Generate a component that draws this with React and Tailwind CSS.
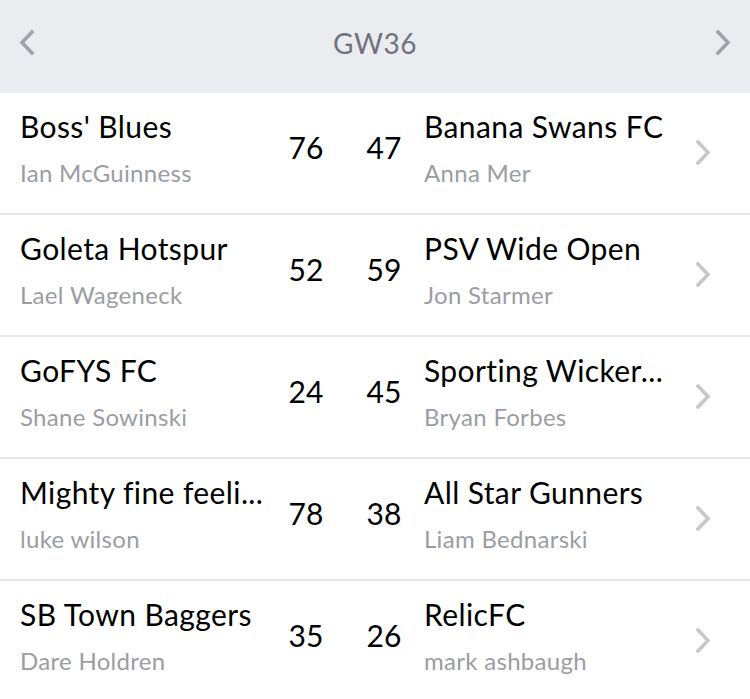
const matches = [
  { home: "Boss' Blues", homeMgr: "Ian McGuinness", homeScore: 76, away: "Banana Swans FC", awayMgr: "Anna Mer", awayScore: 47 },
  { home: "Goleta Hotspur", homeMgr: "Lael Wageneck", homeScore: 52, away: "PSV Wide Open", awayMgr: "Jon Starmer", awayScore: 59 },
  { home: "GoFYS FC", homeMgr: "Shane Sowinski", homeScore: 24, away: "Sporting Wicker...", awayMgr: "Bryan Forbes", awayScore: 45 },
  { home: "Mighty fine feeli...", homeMgr: "luke wilson", homeScore: 78, away: "All Star Gunners", awayMgr: "Liam Bednarski", awayScore: 38 },
  { home: "SB Town Baggers", homeMgr: "Dare Holdren", homeScore: 35, away: "RelicFC", awayMgr: "mark ashbaugh", awayScore: 26 },
];

function Chevron({ dir = "right", className = "" }) {
  return (
    <svg viewBox="0 0 16 27" className={className} fill="none" stroke="currentColor" strokeWidth="3.5" strokeLinecap="square">
      {dir === "right" ? <path d="M3 3 L13 13.5 L3 24" /> : <path d="M13 3 L3 13.5 L13 24" />}
    </svg>
  );
}

function TeamCell({ name, manager }) {
  return (
    <div className="min-w-0">
      <p className="whitespace-nowrap text-[30px] leading-[36px] tracking-[0.4px] text-black">{name}</p>
      <p className="mt-[15px] whitespace-nowrap text-[24px] leading-[28px] tracking-[0.3px] text-[#9b9da3]">
        {manager}
      </p>
    </div>
  );
}

export default function App() {
  return (
    <div className="h-[699px] w-[750px] overflow-hidden bg-white font-['Lato',sans-serif]">
      <header className="flex h-[93px] items-center justify-between bg-[#ebecef] px-[18px] pb-[8px]">
        <Chevron dir="left" className="h-[27px] w-[18px] text-[#a0a2aa]" />
        <h1 className="text-[28px] tracking-[0.5px] text-[#70737d]">GW36</h1>
        <Chevron className="h-[27px] w-[18px] text-[#a0a2aa]" />
      </header>

      {matches.map((m) => (
        <div key={m.home} className="flex h-[122px] items-center border-b-2 border-[#e6e7ea] pb-[12px] pl-5">
          <div className="w-[256px]">
            <TeamCell name={m.home} manager={m.homeMgr} />
          </div>
          <div className="w-[60px] text-center text-[30px] text-black">{m.homeScore}</div>
          <div className="ml-[18px] w-[60px] text-center text-[30px] text-black">{m.awayScore}</div>
          <div className="ml-[10px] w-[254px]">
            <TeamCell name={m.away} manager={m.awayMgr} />
          </div>
          <div className="flex w-[50px] justify-center pt-[10px]">
            <Chevron className="h-[27px] w-[16px] text-[#c5c7cc]" />
          </div>
        </div>
      ))}
    </div>
  );
}
